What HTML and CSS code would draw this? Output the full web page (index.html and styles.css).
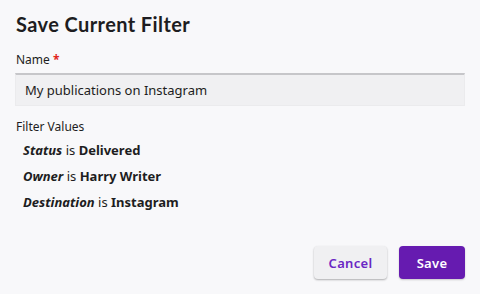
FILE: index.html
```html
<!DOCTYPE html>
<html lang="en">
  <head>
    <meta charset="UTF-8" />
    <title>Save Current Filter</title>
    <link rel="stylesheet" href="styles.css">
  </head>
  <body>
    <div class="dialog">
      <h1 class="title">Save Current Filter</h1>

      <form class="filter-form">
        <label class="field-label" for="name">Name <span class="required">*</span></label>
        <input type="text" id="name" class="text-input" value="My publications on Instagram">

        <div class="values-label">Filter Values</div>
        <ul class="values">
          <li><em>Status</em> is <strong>Delivered</strong></li>
          <li><em>Owner</em> is <strong>Harry Writer</strong></li>
          <li><em>Destination</em> is <strong>Instagram</strong></li>
        </ul>

        <div class="actions">
          <button type="button" class="btn btn-secondary">Cancel</button>
          <button type="submit" class="btn btn-primary">Save</button>
        </div>
      </form>
    </div>
  </body>
</html>
```

FILE: styles.css
```css
body {
  margin: 0;
  background: #f8f8fa;
  font-family: 'Noto Sans', sans-serif;
  color: #1d1d21;
}

.dialog {
  padding: 11px 15px 15px 15px;
}

.title {
  font-family: Lato, 'Noto Sans', sans-serif;
  font-size: 20px;
  font-weight: 700;
  letter-spacing: 0.4px;
  margin: 0 0 0 1px;
  line-height: 26px;
}

.field-label {
  display: block;
  font-size: 12px;
  margin: 15px 0 5px 1px;
  line-height: 16px;
}

.required {
  color: #e1261c;
  font-weight: 700;
}

.text-input {
  display: block;
  box-sizing: border-box;
  width: 100%;
  height: 33px;
  padding: 0 9px;
  border: 1px solid #ebebed;
  border-top: 2px solid #c6c6c9;
  background: #f0f0f2;
  font-family: inherit;
  font-size: 13px;
  color: #1d1d21;
}

.values-label {
  font-size: 12px;
  margin: 13px 0 0 1px;
  line-height: 16px;
}

.values {
  list-style: none;
  margin: 0;
  padding: 2px 0 0 8px;
  font-size: 13px;
}

.values li {
  line-height: 26px;
}

.values em {
  font-weight: 700;
}

.values strong {
  font-weight: 700;
}

.actions {
  display: flex;
  justify-content: flex-end;
  gap: 12px;
  margin-top: 31px;
}

.btn {
  height: 33px;
  border: none;
  border-radius: 4px;
  font-family: inherit;
  font-size: 13px;
  font-weight: 600;
  letter-spacing: 0.3px;
  padding: 0 14px;
  cursor: pointer;
}

.btn-secondary {
  background: #f0f0f2;
  color: #6a27c4;
  min-width: 73px;
  box-shadow: 0 1px 2px rgba(0, 0, 0, 0.3);
}

.btn-primary {
  background: #661bb0;
  color: #fff;
  min-width: 66px;
  box-shadow: 0 1px 2px rgba(0, 0, 0, 0.2);
}
```
